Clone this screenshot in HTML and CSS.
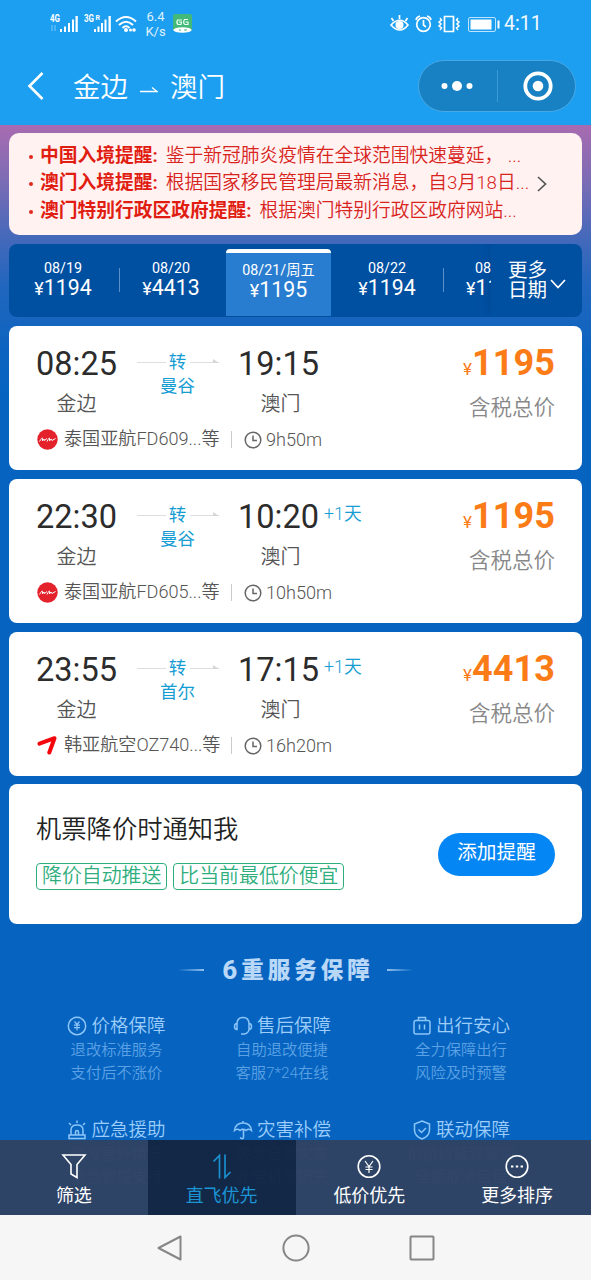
FILE: index.html
```html
<!DOCTYPE html>
<html lang="zh-CN">
<head>
<meta charset="utf-8">
<title>金边 → 澳门</title>
<link rel="stylesheet" href="styles.css">
</head>
<body>
<svg class="defs" width="0" height="0">
  <symbol id="clock" viewBox="0 0 18 18"><circle cx="9" cy="9" r="7.8"/><path d="M9 4.5V9.6H13"/></symbol>
  <symbol id="asia" viewBox="0 0 21 21"><circle cx="10.500" cy="10.500" r="10.200" fill="#e3222b" stroke="none"/><path d="M2.500 12.500Q5.500 7.500 5.500 9.500T5.500 12L7 10L7.500 11.500L10 9.500M10 12.500Q12.500 7.500 12.500 9.500T12.500 12L14 10L15 11.500L18.500 9.500" stroke="#fff" stroke-width="1" fill="none"/></symbol>
  <symbol id="asiana" viewBox="0 0 21 21"><path d="M2.500 8.700L17.500 3.200L12.300 17.500" stroke="#f5060c" stroke-width="4" stroke-linejoin="round" stroke-linecap="round" fill="none"/></symbol>
</svg>
<div class="screen">
  <header class="header">
    <div class="status">
      <svg class="status-left" width="88" height="24" viewBox="0 0 88 24">
        <g fill="#fff">
          <text x="0" y="10" class="net" textLength="10" lengthAdjust="spacingAndGlyphs">4G</text><text x="34" y="10" class="net" textLength="10" lengthAdjust="spacingAndGlyphs">3G</text><text x="45.500" y="8" class="net small">R</text>
          <path d="M10 17h2v3h-2zM14 14.500h2v5.500h-2zM18 11h2v9h-2zM22 7.500h2v12.500h-2zM25.500 4h2.300v16h-2.300zM44 17h2v3h-2zM47.500 14.500h2v5.500h-2zM51 11h2v9h-2zM54.500 7.500h2v12.500h-2zM58.500 4h2.300v16h-2.300z"/>
          <path d="M2 13v6M5 13v6" stroke="#7cc8f7"/>
          <circle cx="76" cy="18" r="2"/><circle cx="80.500" cy="18" r="1.500"/><circle cx="84" cy="18" r="1.800"/>
        </g>
        <path d="M66 9.500Q76 .5 86 9.500M69 13Q76 6.500 83 13M72.500 16Q76 12.500 79.500 16" fill="none" stroke="#fff" stroke-width="2"/>
      </svg>
      <div class="speed">6.4<br>K/s</div>
      <svg class="app-badge" width="19" height="20" viewBox="0 0 19 20"><rect width="19" height="17" rx="2" fill="#42b879"/><path d="M9 6H4.500Q3 9 5 10.500H8L8.500 8H6M15 5.500H11.500Q9.500 9 12 10.500H15V8H12.500" fill="none" stroke="#e8fff1" stroke-width="1.200"/><ellipse cx="9.500" cy="16" rx="9.200" ry="2.800" fill="#fff"/><path d="M6 16h2M11 16h3" stroke="#42b879"/></svg>
      <svg class="status-right" width="112" height="20" viewBox="0 0 112 20" fill="none" stroke="#fff" stroke-width="1.700">
        <path d="M1 11Q10 1.500 18 11Q10 21 1 11zM9.500 5V1M3.500 7L1.500 4M15.500 7L17.500 4"/><circle cx="9.500" cy="11" r="3.200" fill="#fff"/>
        <circle cx="33.500" cy="10.500" r="6.800"/><path d="M33.500 6V11L36 13M26 6Q26.500 3 30 2M41 6Q40.500 3 37 2"/>
        <path d="M54.500 2.500h9v15h-9z"/><path d="M50 4l1.500 2L49 8l2 2-2 2 2.500 2L50 16M68 4l-1.500 2L69 8l-2 2 2 2-2.500 2L68 16" stroke-width="1.500"/>
        <rect x="78.500" y="3.500" width="27" height="14" rx="1.500" stroke-width="1" stroke="#bfe3fb"/><path d="M80.500 5.500h21v10h-21z" fill="#fff" stroke="none"/><path d="M108.500 6.500v8" stroke-width="2"/>
      </svg>
      <div class="time-now">4:11</div>
    </div>
    <div class="navbar">
      <svg class="back" width="18" height="30" viewBox="0 0 18 30"><path d="M15.500 2L2.500 15L15.500 28" fill="none" stroke="#fff" stroke-width="2.600"/></svg>
      <div class="route"><span>金边</span>
        <svg width="18" height="8" viewBox="0 0 18 8"><path d="M0 5.500H17L12 1.500" fill="none" stroke="#fff" stroke-width="1.400"/></svg>
        <span>澳门</span></div>
      <div class="capsule">
        <svg width="32" height="12" viewBox="0 0 32 12" fill="#fff"><circle cx="3.500" cy="6" r="3"/><circle cx="16" cy="6" r="5"/><circle cx="28.500" cy="6" r="3"/></svg>
        <i class="capsule-line"></i>
        <svg width="30" height="30" viewBox="0 0 30 30"><circle cx="15" cy="15" r="12.700" fill="none" stroke="#fff" stroke-width="3.800"/><circle cx="15" cy="15" r="5.300" fill="#fff"/></svg>
      </div>
    </div>
  </header>

  <main class="content">
    <section class="notice">
      <ul class="notice-list">
        <li><b>中国入境提醒:</b> 鉴于新冠肺炎疫情在全球范围快速蔓延， ...</li>
        <li><b>澳门入境提醒:</b> 根据国家移民管理局最新消息，自3月18日...</li>
        <li><b>澳门特别行政区政府提醒:</b> 根据澳门特别行政区政府网站...</li>
      </ul>
      <svg class="notice-more" width="10" height="16" viewBox="0 0 10 16"><path d="M1 1L8.500 8L1 15" fill="none" stroke="#555" stroke-width="1.700"/></svg>
    </section>

    <section class="dates">
      <div class="days">
        <div class="day"><span>08/19</span><strong><small>¥</small>1194</strong></div>
        <div class="day divided"><span>08/20</span><strong><small>¥</small>4413</strong></div>
        <div class="day active"><span>08/21/周五</span><strong><small>¥</small>1195</strong></div>
        <div class="day"><span>08/22</span><strong><small>¥</small>1194</strong></div>
        <div class="day divided partial"><span>08</span><strong><small>¥</small>11</strong></div>
      </div>
      <div class="more-dates"><span>更多<br>日期</span>
        <svg width="16" height="10" viewBox="0 0 16 10"><path d="M1 1L8 8.500L15 1" fill="none" stroke="#fff" stroke-width="1.700"/></svg></div>
    </section>

    <section class="flight">
      <div class="trip">
        <div class="stop"><span class="clock">08:25</span><span class="city">金边</span></div>
        <div class="via"><div class="via-line"><i></i><em>转</em><i class="tip"></i></div><span>曼谷</span></div>
        <div class="stop arrive"><span class="clock">19:15</span><span class="city">澳门</span></div>
        <div class="plus"></div>
        <div class="fare"><strong><small>¥</small>1195</strong><span>含税总价</span></div>
      </div>
      <div class="airline"><svg class="logo"><use href="#asia"/></svg><span class="carrier">泰国亚航FD609...等</span><i></i><svg class="dur"><use href="#clock"/></svg><span>9h50m</span></div>
    </section>

    <section class="flight">
      <div class="trip">
        <div class="stop"><span class="clock">22:30</span><span class="city">金边</span></div>
        <div class="via"><div class="via-line"><i></i><em>转</em><i class="tip"></i></div><span>曼谷</span></div>
        <div class="stop arrive"><span class="clock">10:20</span><span class="city">澳门</span></div>
        <div class="plus">+1天</div>
        <div class="fare"><strong><small>¥</small>1195</strong><span>含税总价</span></div>
      </div>
      <div class="airline"><svg class="logo"><use href="#asia"/></svg><span class="carrier">泰国亚航FD605...等</span><i></i><svg class="dur"><use href="#clock"/></svg><span>10h50m</span></div>
    </section>

    <section class="flight">
      <div class="trip">
        <div class="stop"><span class="clock">23:55</span><span class="city">金边</span></div>
        <div class="via"><div class="via-line"><i></i><em>转</em><i class="tip"></i></div><span>首尔</span></div>
        <div class="stop arrive"><span class="clock">17:15</span><span class="city">澳门</span></div>
        <div class="plus">+1天</div>
        <div class="fare"><strong><small>¥</small>4413</strong><span>含税总价</span></div>
      </div>
      <div class="airline"><svg class="logo"><use href="#asiana"/></svg><span class="carrier">韩亚航空OZ740...等</span><i></i><svg class="dur"><use href="#clock"/></svg><span>16h20m</span></div>
    </section>

    <section class="alert">
      <div>
        <h2>机票降价时通知我</h2>
        <div class="tags"><span>降价自动推送</span><span>比当前最低价便宜</span></div>
      </div>
      <button class="add">添加提醒</button>
    </section>

    <section class="services">
      <h3><i></i><span><b>6</b>重服务保障</span><i class="right"></i></h3>
      <div class="grid">
        <div class="item"><h4><svg viewBox="0 0 20 20"><circle cx="10" cy="10" r="8.700"/><path d="M7.500 5.500L10 8.500L12.500 5.500M10 8.500V14.500M7 9.200H13M7 11.700H13" stroke-width="1.200"/></svg>价格保障</h4><p>退改标准服务</p><p>支付后不涨价</p></div>
        <div class="item"><h4><svg viewBox="0 0 20 20"><path d="M4 8Q4 1.500 10 1.500T16 8M4 7.500Q1.500 7.500 1.500 10.500T4 13.500zM16 7.500Q18.500 7.500 18.500 10.500T16 13.500zM16 13.500Q15.500 17 11.500 18M8 18H12"/></svg>售后保障</h4><p>自助退改便捷</p><p>客服7*24在线</p></div>
        <div class="item"><h4><svg viewBox="0 0 20 20"><rect x="2" y="4.500" width="16" height="13.500" rx="2"/><path d="M6.500 4.500V1.500H13.500V4.500M7.500 8.500V13.500M12.500 8.500V13.500"/></svg>出行安心</h4><p>全力保障出行</p><p>风险及时预警</p></div>
        <div class="item"><h4><svg viewBox="0 0 20 20"><path d="M4 15V10Q4 5 10 5T16 10V15M2 15H18V18.500H2zM8.500 15V12Q8.500 10.500 10 10.500T11.500 12V15M10 3V.5M4 5L2 3M16 5L18 3"/></svg>应急援助</h4><p>突发意外情况</p><p>紧急救援支持</p></div>
        <div class="item"><h4><svg viewBox="0 0 20 20"><path d="M1.500 10.500Q2.500 3 10 3T18.500 10.500Q16 8 13 10.500Q10 8 7 10.500Q4 8 1.500 10.500zM10 3V1M10.500 10V17Q10.500 19 8.500 18.500L7 17.500"/></svg>灾害补偿</h4><p>突发自然灾害</p><p>补偿机票损失</p></div>
        <div class="item"><h4><svg viewBox="0 0 20 20"><path d="M10 1L17.500 4V10Q17.500 16 10 19Q2.500 16 2.500 10V4zM6.500 9.500L9.500 12.500L14 8"/></svg>联动保障</h4><p>前航段延误取消</p><p>全额取消后程</p></div>
      </div>
    </section>
  </main>

  <footer class="tabs">
    <div class="tab"><svg viewBox="0 0 26 26"><path d="M2 2H24L16 11.500V24.500L10 21V11.500z"/></svg>筛选</div>
    <div class="tab on"><svg viewBox="0 0 26 26"><path d="M4.500 8.500L10.500 2.500V25.500M16 1.500V24.500L21.500 19"/></svg>直飞优先</div>
    <div class="tab"><svg viewBox="0 0 26 26"><circle cx="13" cy="13.500" r="10.800"/><path d="M9 8L13 13.500L17 8M13 13V20M9.500 14H16.500M9.500 16.500H16.500" stroke-width="1.200"/></svg>低价优先</div>
    <div class="tab"><svg viewBox="0 0 26 26"><circle cx="13" cy="13.500" r="10.800"/><path d="M7 13.500h2.400M11.800 13.500h2.400M16.600 13.500h2.400" stroke-width="2.200"/></svg>更多排序</div>
  </footer>
  <nav class="system">
    <svg viewBox="0 0 28 28"><path d="M24.500 2.500V25.500L2.500 14z" stroke-linejoin="round"/></svg>
    <svg viewBox="0 0 28 28"><circle cx="14" cy="14" r="12.600"/></svg>
    <svg viewBox="0 0 28 28"><rect x="2.500" y="2.500" width="23" height="23" rx=".8"/></svg>
  </nav>
</div>
</body>
</html>
```
FILE: styles.css
```css
* { box-sizing: border-box; }
body {
  margin: 0;
  font-family: Roboto, "Noto Sans CJK SC", sans-serif;
  font-weight: 350;
}
h2, h3, h4, p, ul { margin: 0; padding: 0; font-weight: inherit; }
i, em { font-style: normal; display: block; }
svg { display: block; flex: none; }
.defs { position: absolute; }
.screen {
  position: relative;
  width: 591px;
  height: 1280px;
  overflow: hidden;
  display: flex;
  flex-direction: column;
  background: #0664c0;
}

/* Header */
.header { height: 125px; background: #1d9ff1; color: #fff; flex: none; }
.status { height: 47px; display: flex; align-items: center; padding-left: 50px; }
.net { font: 700 10px Roboto, sans-serif; }
.net.small { font-size: 7px; }
.speed { width: 27px; margin-left: 4px; text-align: center; font-size: 13px; line-height: 15px; font-weight: 400; opacity: .85; }
.app-badge { margin-left: 4px; }
.status-right { margin-left: 198px; }
.time-now { margin-left: 2px; font-size: 19.500px; opacity: .95; font-weight: 400; }
.navbar { height: 78px; display: flex; align-items: center; padding: 0 15px 0 27px; }
.route { display: flex; align-items: center; gap: 12px; margin-left: 28px; font-size: 27.500px; line-height: 40px; padding-top: 4px; }
.route svg { margin-top: 4px; }
.capsule {
  margin-left: auto; width: 158px; height: 52px; border-radius: 26px;
  background: #1781c3; border: 1px solid #48a8e5;
  display: flex; align-items: center; padding-left: 22px;
}
.capsule-line { width: 1px; height: 32px; background: #3c9ad6; margin: 0 25px 0 24px; }

/* Notice */
.content {
  height: 1090px; flex: none; padding: 8px 9px 0;
  background: linear-gradient(#a86bb0 0, #7d6cb5 55px, #4769ba 110px, #2166be 160px, #0b64c0 230px, #0664c0 270px);
}
.notice {
  height: 102px; border-radius: 10px; background: #fff2f1; color: #d8241d;
  display: flex; align-items: center; padding-left: 19px;
}
.notice-list { width: 509px; list-style: none; font-size: 18.750px; line-height: 27.500px; white-space: nowrap; }
.notice-list li { display: flex; gap: 8px; }
.notice-list li::before { content: ""; width: 4px; height: 4px; border-radius: 2px; background: #e02a20; margin: 12px -1px 0 1px; }
.notice-list b { font-weight: 700; color: #e11d12; }

/* Date strip */
.dates {
  display: flex; margin-top: 9px; height: 73px; border-radius: 8px;
  background: #0050a2; color: #fff; overflow: hidden;
}
.days { display: flex; width: 482px; overflow: hidden; }
.day { flex: 0 0 108px; display: flex; flex-direction: column; align-items: center; padding-top: 15px; position: relative; }
.day span { font-size: 14.300px; line-height: 19px; font-weight: 400; }
.day strong { font-size: 21.300px; line-height: 20px; font-weight: 400; }
.day small { font-size: 18px; }
.day.active {
  flex-basis: 105px; margin: 5px 2px 0 1px; height: 67px; padding-top: 8px;
  background: #297dd0; border-top: 4px solid #fff; border-radius: 4px 4px 0 0;
}
.day.divided::before { content: ""; position: absolute; left: 2px; top: 24px; width: 1px; height: 24px; background: #5b8fc7; }
.day.partial { align-items: flex-start; flex-basis: 50px; padding-left: 25px; overflow: hidden; }
.day.partial span { padding-left: 9px; }
.more-dates {
  flex: 1; display: flex; align-items: center; gap: 3px; padding-left: 17px;
  font-size: 19.500px; line-height: 20px; font-weight: 400; box-shadow: -3px 0 8px #004a98;
}
.more-dates svg { margin-top: 6px; }

/* Flights */
.flight { margin-top: 9px; height: 144px; border-radius: 8px; background: #fff; padding: 18px 28px 0 27px; }
.trip { display: flex; height: 82px; }
.stop { width: 81px; display: flex; flex-direction: column; align-items: center; }
.clock { font-size: 32.500px; line-height: 41px; font-weight: 400; color: #2c2c2c; }
.city { font-size: 20px; line-height: 38px; color: #555; }
.arrive .city { padding-left: 4px; }
.via { width: 121px; padding-top: 6px; text-align: center; color: #159cd3; font-size: 17.500px; line-height: 24px; font-weight: 400; }
.via-line { display: flex; justify-content: center; align-items: center; gap: 3px; height: 24px; }
.via-line i { width: 29px; height: 1px; background: #dedede; }
.via-line .tip { position: relative; }
.via-line .tip::after { content: ""; position: absolute; right: 0; bottom: 0; border-left: 6px solid #d6d6d6; border-top: 4px solid transparent; }
.via-line em { width: 18px; }
.plus { padding: 5px 0 0 5px; font-size: 17.800px; line-height: 24px; color: #159cd3; }
.fare { margin-left: auto; text-align: right; margin-right: -1px; }
.fare strong { display: block; font-size: 36px; line-height: 38px; font-weight: 700; color: #fb7b17; letter-spacing: .1px; }
.fare small { font-size: 17px; font-weight: 400; }
.fare span { display: block; font-size: 21.500px; line-height: 37px; padding-top: 5px; color: #888; }
.fare span { padding-top: 1px; }
.airline { display: flex; align-items: center; height: 27px; font-size: 18.100px; line-height: 26px; color: #555; white-space: nowrap; }
.logo { width: 21px; height: 21px; margin: 0 6px 0 1px; }
.carrier { width: 155px; height: 28px; }
.airline i { width: 1px; height: 17px; background: #ccc; margin: 0 12px; }
.dur { width: 18px; height: 18px; margin-right: 4px; fill: none; stroke: #666; stroke-width: 1.500; }

/* Price alert */
.alert {
  margin-top: 8px; height: 140px; border-radius: 8px; background: #fff;
  padding: 0 27px; display: flex; justify-content: space-between; align-items: center;
}
.alert h2 { font-size: 25.300px; line-height: 36px; color: #222; padding-top: 3px; margin-bottom: 15px; }
.tags { display: flex; gap: 6px; margin-bottom: 10px; }
.tags span { height: 27px; border: 1.500px solid #2fae7d; border-radius: 4px; padding: 0 5px; font-size: 19.900px; line-height: 25px; color: #2fae7d; }
.add { width: 117px; height: 43px; border: 0; border-radius: 22px; background: #0586f5; color: #fff; font: inherit; font-weight: 400; font-size: 19.700px; line-height: 39px; padding: 0 0 3px; }

/* Service guarantees */
.services h3 { display: flex; justify-content: center; align-items: center; height: 34px; margin-top: 29px; }
.services h3 span { display: flex; align-items: center; font-size: 22.500px; font-weight: 900; letter-spacing: 4px; color: #b9d7f7; white-space: nowrap; margin: 0 13px 0 18px; line-height: 34px; }
.services h3 b { font-size: 26px; font-weight: 800; }
.services h3 i { width: 26px; height: 2px; background: linear-gradient(90deg, transparent, #8fc0f0); }
.services h3 .right { background: linear-gradient(90deg, #8fc0f0, transparent); }
.grid { display: grid; grid-template-columns: 165px 166px 192px; grid-auto-rows: 104px; margin: 26px 0 0 25px; }
.item { text-align: center; color: #5ba1e4; font-size: 15.300px; line-height: 23.300px; }
.item h4 { display: flex; justify-content: center; align-items: center; gap: 4px; font-size: 18.500px; line-height: 26px; color: #9ccdfb; }
.item h4 svg { width: 20px; height: 20px; fill: none; stroke: #8cc5f8; stroke-width: 1.500; }

/* Bottom bars */
.tabs { position: absolute; left: 0; right: 0; top: 1140px; height: 76px; display: flex; }
.tab { flex: 1; display: flex; flex-direction: column; align-items: center; padding-top: 13px; background: rgba(48, 67, 99, .96); color: #fff; font-size: 18px; line-height: 29px; font-weight: 400; }
.tab svg { width: 26px; height: 26px; margin-bottom: 2px; fill: none; stroke: currentColor; stroke-width: 1.600; }
.tab.on { background: rgba(20, 38, 67, .97); color: #1b94d4; }
.system { height: 65px; flex: none; display: flex; justify-content: center; gap: 98px; align-items: center; background: #f6f6f6; position: relative; left: 0; }
.system svg { width: 28px; height: 28px; fill: none; stroke: #868686; stroke-width: 2; }
```
